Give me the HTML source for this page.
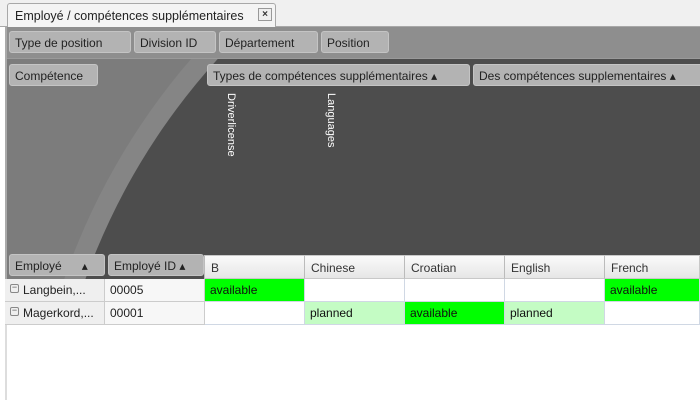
<!DOCTYPE html>
<html><head><style>
*{margin:0;padding:0;box-sizing:border-box}
html,body{width:700px;height:400px;overflow:hidden}
body{background:#fff;font-family:"Liberation Sans",sans-serif;font-size:12px;position:relative;color:#333}
.abs{position:absolute}
.tabbar{left:0;top:0;width:700px;height:27px;background:#f0f0f0;border-bottom:1px solid #a8a8a8}
.tab{left:7px;top:3px;width:269px;height:24px;background:#f4f4f4;border:1px solid #a8a8a8;border-bottom:none;border-radius:3px 3px 0 0;padding:5px 0 0 7px;font-size:12.5px;color:#222}
.x{left:258px;top:8px;width:14px;height:13px;border:1px solid #999;background:#eee;font-size:10px;line-height:11px;text-align:center;font-weight:bold}
.main{left:5px;top:27px;width:695px;height:298px;overflow:hidden;background:#7c7c7c;border-left:2px solid #aaa}
.top{left:0;top:0;width:695px;height:32px;background:#8e8e8e;border-bottom:1px solid #9a9a9a}
.btn{position:absolute;height:22px;background:#b3b3b3;border:1px solid #c4c4c4;border-radius:3px;padding:4px 0 0 5px;color:#222;font-size:12px;white-space:nowrap;overflow:hidden}
.circ1{left:20px;top:-202px;width:1350px;height:1350px;border-radius:50%;background:#858585}
.circ2{left:40px;top:-182px;width:1310px;height:1310px;border-radius:50%;background:#4d4d4d}
.vt{color:#fff;font-size:11px;writing-mode:vertical-rl;position:absolute}
.hc{position:absolute;top:255px;height:24px;background:linear-gradient(#fafafa,#e6e6e6);border:1px solid #c8c8c8;border-left:1px solid #bbb;padding:5px 0 0 6px;color:#333}
.cell{position:absolute;height:23px;background:#fff;border-right:1px solid #d0d8e4;border-bottom:1px solid #d0d8e4;padding:4px 0 0 5px;color:#111}
.rh{position:absolute;height:23px;background:#efefef;border-right:1px solid #ccc;border-bottom:1px solid #ccc;padding:4px 0 0 5px;color:#222}
.ex{display:inline-block;width:9px;height:9px;border:1px solid #888;border-radius:2px;font-size:9px;line-height:5px;text-align:center;vertical-align:top;margin-top:1px;margin-right:4px;color:#555}
</style></head><body>
<div class="abs tabbar"></div>
<div class="abs tab">Employé / compétences supplémentaires</div>
<div class="abs x">×</div>
<div class="abs main">
 <div class="abs circ1"></div>
 <div class="abs circ2"></div>
 <div class="abs top"></div>
 <div class="btn" style="left:2px;top:4px;width:122px">Type de position</div>
 <div class="btn" style="left:127px;top:4px;width:82px">Division ID</div>
 <div class="btn" style="left:212px;top:4px;width:99px">Département</div>
 <div class="btn" style="left:314px;top:4px;width:68px">Position</div>
 <div class="btn" style="left:2px;top:37px;width:89px">Compétence</div>
 <div class="btn" style="left:200px;top:37px;width:263px">Types de compétences supplémentaires ▴</div>
 <div class="btn" style="left:466px;top:37px;width:240px">Des compétences supplementaires ▴</div>
 <div class="vt" style="left:218px;top:66px">Driverlicense</div>
 <div class="vt" style="left:318px;top:66px">Languages</div>
 <div class="btn" style="left:2px;top:227px;width:96px;height:22px">Employé &nbsp;&nbsp;&nbsp;&nbsp;&nbsp;▴</div>
 <div class="btn" style="left:101px;top:227px;width:96px;height:22px">Employé ID ▴</div>
</div>
<div class="hc" style="left:204px;width:101px">B</div>
<div class="hc" style="left:304px;width:101px">Chinese</div>
<div class="hc" style="left:404px;width:101px">Croatian</div>
<div class="hc" style="left:504px;width:101px">English</div>
<div class="hc" style="left:604px;width:96px">French</div>
<div class="rh" style="left:5px;top:279px;width:100px"><span class="ex">−</span>Langbein,...</div>
<div class="rh" style="left:105px;top:279px;width:100px;background:#f7f7f7">00005</div>
<div class="cell" style="left:205px;top:279px;width:100px;background:#00ff00">available</div>
<div class="cell" style="left:305px;top:279px;width:100px"></div>
<div class="cell" style="left:405px;top:279px;width:100px"></div>
<div class="cell" style="left:505px;top:279px;width:100px"></div>
<div class="cell" style="left:605px;top:279px;width:95px;background:#00ff00">available</div>
<div class="rh" style="left:5px;top:302px;width:100px"><span class="ex">−</span>Magerkord,...</div>
<div class="rh" style="left:105px;top:302px;width:100px;background:#f7f7f7">00001</div>
<div class="cell" style="left:205px;top:302px;width:100px"></div>
<div class="cell" style="left:305px;top:302px;width:100px;background:#c4fcc4">planned</div>
<div class="cell" style="left:405px;top:302px;width:100px;background:#00ff00">available</div>
<div class="cell" style="left:505px;top:302px;width:100px;background:#c4fcc4">planned</div>
<div class="cell" style="left:605px;top:302px;width:95px"></div>
<div class="abs" style="left:5px;top:325px;width:2px;height:75px;background:#ddd"></div>
</body></html>
